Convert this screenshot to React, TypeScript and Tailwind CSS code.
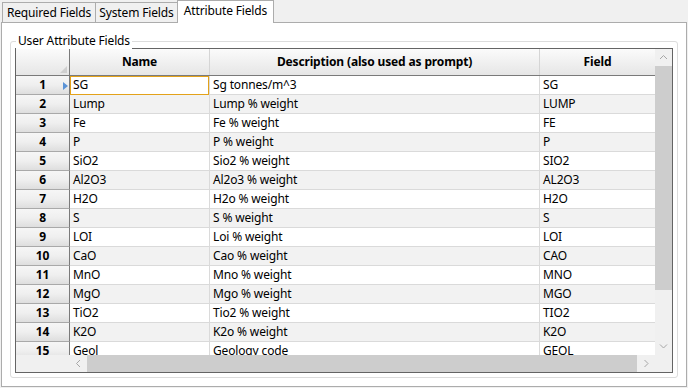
import React from 'react';

const ROWS: [string, string, string][] = [
  ['SG', 'Sg tonnes/m^3', 'SG'],
  ['Lump', 'Lump % weight', 'LUMP'],
  ['Fe', 'Fe % weight', 'FE'],
  ['P', 'P % weight', 'P'],
  ['SiO2', 'Sio2 % weight', 'SIO2'],
  ['Al2O3', 'Al2o3 % weight', 'AL2O3'],
  ['H2O', 'H2o % weight', 'H2O'],
  ['S', 'S % weight', 'S'],
  ['LOI', 'Loi % weight', 'LOI'],
  ['CaO', 'Cao % weight', 'CAO'],
  ['MnO', 'Mno % weight', 'MNO'],
  ['MgO', 'Mgo % weight', 'MGO'],
  ['TiO2', 'Tio2 % weight', 'TIO2'],
  ['K2O', 'K2o % weight', 'K2O'],
  ['Geol', 'Geology code', 'GEOL'],
];

function Chevron({ dir }: { dir: 'up' | 'down' | 'left' | 'right' }) {
  const pts = {
    up: '1,5 4.5,1.5 8,5',
    down: '1,1.5 4.5,5 8,1.5',
    left: '5,1 1.5,4.5 5,8',
    right: '1.5,1 5,4.5 1.5,8',
  }[dir];
  const vertical = dir === 'up' || dir === 'down';
  return (
    <svg width={vertical ? 9 : 7} height={vertical ? 7 : 9} viewBox={vertical ? '0 0 9 7' : '0 0 7 9'}>
      <polyline points={pts} fill="none" stroke="#a6a6a6" strokeWidth="1" />
    </svg>
  );
}

function Tab({ label, active, className }: { label: string; active?: boolean; className: string }) {
  return (
    <div
      className={
        'flex items-center justify-center border border-b-0 border-[#acacac] ' +
        (active ? 'h-[23px] -mb-px bg-white relative z-10 pb-[2px] ' : 'h-[20px] bg-[#f0f0f0] ') +
        className
      }
    >
      {label}
    </div>
  );
}

export default function App() {
  return (
    <div
      className="w-[688px] h-[388px] bg-[#f0f0f0] overflow-hidden text-[12px] tracking-[-0.15px] text-black"
      style={{ fontFamily: '"Noto Sans", "Open Sans", sans-serif' }}
    >
      {/* tab strip */}
      <div className="flex items-end h-[22px] pl-[2px]">
        <Tab label="Required Fields" className="w-[94px]" />
        <Tab label="System Fields" className="w-[83px] -ml-px" />
        <Tab label="Attribute Fields" active className="w-[97px] -ml-px" />
      </div>

      {/* tab page */}
      <div className="ml-[1px] w-[686px] h-[365px] border border-[#acacac] bg-white">
        {/* group box */}
        <div className="relative mt-[18px] ml-[8px] w-[668px] h-[337px] border border-[#dcdcdc] rounded-[3px] pl-[4px] pt-[6px]">
          <span className="absolute left-[5px] top-[-9px] bg-white px-[2px] leading-[16px]">User Attribute Fields</span>

          {/* data grid */}
          <div className="w-[658px] h-[325px] border border-[#646464] flex">
            <div className="w-[639px] flex flex-col">
              <div className="h-[306px] overflow-hidden">
                {/* column headers */}
                <div className="flex h-[27px] border-b border-[#7a7a7a] bg-linear-to-b from-[#fbfbfb] to-[#e6e6e6] font-bold">
                  <div className="relative w-[54px] border-r border-[#7a7a7a]">
                    <svg className="absolute right-[2px] bottom-[2px]" width="7" height="7" viewBox="0 0 7 7">
                      <polygon points="7,0 7,7 0,7" fill="#cfcfcf" />
                    </svg>
                  </div>
                  <div className="w-[140px] border-r border-[#d5d5d5] flex items-center justify-center">Name</div>
                  <div className="w-[330px] border-r border-[#d5d5d5] flex items-center justify-center">
                    Description (also used as prompt)
                  </div>
                  <div className="flex-1 flex items-center justify-center">Field</div>
                </div>

                {/* rows */}
                {ROWS.map(([name, desc, field], i) => (
                  <div
                    key={i}
                    className={'flex h-[19px] border-b border-[#dadada] ' + (i % 2 === 1 ? 'bg-[#f2f2f2]' : 'bg-white')}
                  >
                    <div className="relative w-[54px] -mb-px border-r border-b border-r-[#7a7a7a] border-b-[#a9a9a9] bg-linear-to-b from-[#f6f6f6] via-[#efefef] to-[#dedede] flex items-center justify-center font-bold">
                      {i + 1}
                      {i === 0 && (
                        <svg className="absolute right-[1px] top-[6px]" width="5" height="8" viewBox="0 0 5 8">
                          <polygon points="0,0 5,4 0,8" fill="#5b93d6" />
                        </svg>
                      )}
                    </div>
                    <div className="relative w-[140px] border-r border-[#dadada] pl-[3px] flex items-center">
                      {name}
                      {i === 0 && (
                        <span className="absolute left-0 top-0 right-[0px] bottom-[-1px] border border-[#e3a21a]" />
                      )}
                    </div>
                    <div className="w-[330px] border-r border-[#dadada] pl-[3px] flex items-center">{desc}</div>
                    <div className="flex-1 pl-[3px] flex items-center">{field}</div>
                  </div>
                ))}
              </div>

              {/* horizontal scrollbar */}
              <div className="h-[17px] flex bg-[#f0f0f0]">
                <div className="w-[54px]" />
                <div className="w-[17px] flex items-center justify-center">
                  <Chevron dir="left" />
                </div>
                <div className="w-[550px] bg-[#cdcdcd]" />
                <div className="w-[18px] flex items-center justify-center">
                  <Chevron dir="right" />
                </div>
              </div>
            </div>

            {/* vertical scrollbar */}
            <div className="w-[17px] flex flex-col bg-[#f0f0f0]">
              <div className="h-[17px] flex items-center justify-center">
                <Chevron dir="up" />
              </div>
              <div className="h-[224px] bg-[#cdcdcd]" />
              <div className="h-[48px]" />
              <div className="h-[17px] flex items-center justify-center">
                <Chevron dir="down" />
              </div>
              <div className="h-[17px]" />
            </div>
          </div>
        </div>
      </div>
    </div>
  );
}
